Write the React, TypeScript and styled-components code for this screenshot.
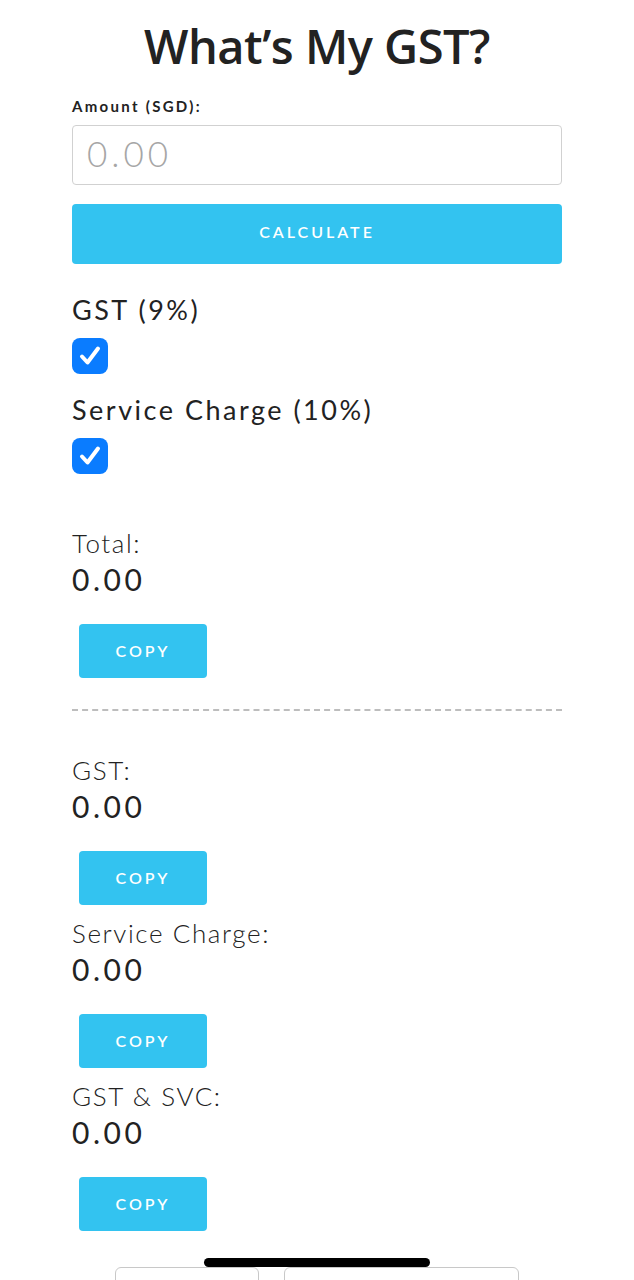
import React from "react";
import styled, { createGlobalStyle } from "styled-components";

const Global = createGlobalStyle`
  html, body { margin: 0; padding: 0; background: #fff; }
  body { font-family: "Lato", "Open Sans", sans-serif; color: #222; }
  * { box-sizing: border-box; }
`;

const Page = styled.div`
  width: 634px;
  padding: 0 72px 40px;
  display: flex;
  flex-direction: column;
`;

const Title = styled.h1`
  margin: 14px 0 0;
  font-family: "Open Sans", "Lato", sans-serif;
  font-weight: 600;
  font-size: 47px;
  line-height: 64px;
  text-align: center;
  color: #222;
  letter-spacing: -0.5px;
`;

const SmallLabel = styled.label`
  margin-top: 18px;
  font-size: 15px;
  font-weight: 700;
  letter-spacing: 2.3px;
  line-height: 20px;
  color: #222;
`;

const AmountInput = styled.input`
  margin-top: 9px;
  height: 60px;
  width: 100%;
  border: 1px solid #d1d1d1;
  border-radius: 4px;
  padding: 0 14px 5px;
  font-family: "Lato", sans-serif;
  font-weight: 300;
  font-size: 35px;
  color: #222;
  letter-spacing: 4px;
  &::placeholder { color: #a6a6a6; }
  outline: none;
`;

const Button = styled.button<{ $wide?: boolean }>`
  height: ${(p) => (p.$wide ? "60px" : "54px")};
  width: ${(p) => (p.$wide ? "100%" : "128px")};
  border: none;
  border-radius: 4px;
  background: #33c3f0;
  color: #fff;
  font-family: "Lato", sans-serif;
  font-weight: 600;
  font-size: 16px;
  letter-spacing: 3px;
  text-transform: uppercase;
  cursor: pointer;
  padding: 0;
  text-align: center;
`;

const CalcButton = styled(Button)`
  margin-top: 19px;
  padding-bottom: 5px;
`;

const OptionLabel = styled.div<{ $first?: boolean }>`
  margin-top: ${(p) => (p.$first ? "28px" : "18px")};
  font-size: 27px;
  line-height: 36px;
  letter-spacing: 2.5px;
  color: #222;
`;

const Check = styled.span`
  margin-top: 10px;
  width: 36px;
  height: 36px;
  border-radius: 8px;
  background: #0a7cff;
  display: flex;
  align-items: center;
  justify-content: center;
`;

const ResultBlock = styled.div<{ $top: number }>`
  margin-top: ${(p) => p.$top}px;
  display: flex;
  flex-direction: column;
  align-items: flex-start;
`;

const ResultLabel = styled.div`
  font-size: 26px;
  font-weight: 300;
  line-height: 34px;
  letter-spacing: 1.6px;
  color: #222;
`;

const ResultValue = styled.div`
  font-size: 30px;
  font-weight: 400;
  line-height: 38px;
  letter-spacing: 3.5px;
  color: #222;
`;

const CopyButton = styled(Button)`
  margin: 26px 0 0 7px;
  padding-bottom: 2px;
`;

const Divider = styled.hr`
  margin: 31px 0 0;
  border: none;
  border-top: 2px dashed #bdbdbd;
  width: 100%;
`;

const BottomRow = styled.div`
  margin-top: 36px;
  display: flex;
  gap: 25px;
  padding-left: 43px;
`;

const BottomBox = styled.div<{ $w: number }>`
  width: ${(p) => p.$w}px;
  height: 50px;
  border: 1px solid #c8c8c8;
  border-radius: 6px;
`;

const HomeIndicator = styled.div`
  position: absolute;
  top: 1258px;
  left: 204px;
  width: 226px;
  height: 9px;
  border-radius: 5px;
  background: #000;
`;

const CheckMark = () => (
  <svg width="26" height="26" viewBox="0 0 26 26">
    <path d="M5 13.5 L10.5 19.5 L21 5.5" fill="none" stroke="#fff" strokeWidth="4" strokeLinecap="round" strokeLinejoin="round" />
  </svg>
);

export default function App() {
  return (
    <>
      <Global />
      <Page>
        <Title>What’s My GST?</Title>
        <SmallLabel>Amount (SGD):</SmallLabel>
        <AmountInput placeholder="0.00" />
        <CalcButton $wide>Calculate</CalcButton>
        <OptionLabel $first>GST (9%)</OptionLabel>
        <Check><CheckMark /></Check>
        <OptionLabel>Service Charge (10%)</OptionLabel>
        <Check><CheckMark /></Check>
        <ResultBlock $top={52}>
          <ResultLabel>Total:</ResultLabel>
          <ResultValue>0.00</ResultValue>
          <CopyButton>Copy</CopyButton>
        </ResultBlock>
        <Divider />
        <ResultBlock $top={42}>
          <ResultLabel>GST:</ResultLabel>
          <ResultValue>0.00</ResultValue>
          <CopyButton>Copy</CopyButton>
        </ResultBlock>
        <ResultBlock $top={11}>
          <ResultLabel>Service Charge:</ResultLabel>
          <ResultValue>0.00</ResultValue>
          <CopyButton>Copy</CopyButton>
        </ResultBlock>
        <ResultBlock $top={11}>
          <ResultLabel>GST &amp; SVC:</ResultLabel>
          <ResultValue>0.00</ResultValue>
          <CopyButton>Copy</CopyButton>
        </ResultBlock>
        <BottomRow>
          <BottomBox $w={144} />
          <BottomBox $w={235} />
        </BottomRow>
      </Page>
      <HomeIndicator />
    </>
  );
}
